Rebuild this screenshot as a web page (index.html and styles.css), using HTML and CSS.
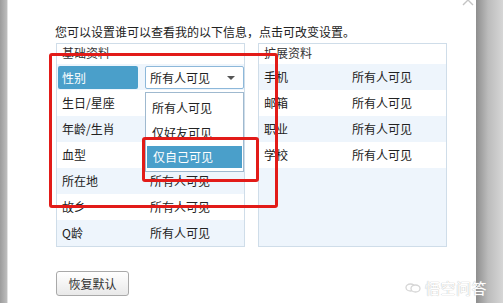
FILE: index.html
```html
<!DOCTYPE html>
<html lang="zh-CN">
<head>
    <meta charset="UTF-8">
    <title>隐私设置</title>
    <link rel="stylesheet" href="styles.css">
</head>
<body>
    <div class="screen">
        <div class="edge-left"></div>

        <div class="dialog">
            <p class="intro">您可以设置谁可以查看我的以下信息，点击可改变设置。</p>

            <div class="panels">
                <div class="panel">
                    <div class="panel-head">基础资料</div>
                    <div class="row alt">
                        <div class="label"><span class="picked">性别</span></div>
                        <div class="value">
                            <div class="select">所有人可见<span class="caret"></span></div>
                            <ul class="options">
                                <li>所有人可见</li>
                                <li>仅好友可见</li>
                                <li class="on">仅自己可见</li>
                            </ul>
                        </div>
                    </div>
                    <div class="row"><div class="label">生日/星座</div><div class="value"></div></div>
                    <div class="row alt"><div class="label">年龄/生肖</div><div class="value"></div></div>
                    <div class="row"><div class="label">血型</div><div class="value"></div></div>
                    <div class="row alt"><div class="label">所在地</div><div class="value">所有人可见</div></div>
                    <div class="row"><div class="label">故乡</div><div class="value">所有人可见</div></div>
                    <div class="row alt"><div class="label">Q龄</div><div class="value">所有人可见</div></div>
                </div>

                <div class="panel">
                    <div class="panel-head">扩展资料</div>
                    <div class="row alt"><div class="label">手机</div><div class="value">所有人可见</div></div>
                    <div class="row"><div class="label">邮箱</div><div class="value">所有人可见</div></div>
                    <div class="row alt"><div class="label">职业</div><div class="value">所有人可见</div></div>
                    <div class="row"><div class="label">学校</div><div class="value">所有人可见</div></div>
                    <div class="filler"></div>
                </div>
            </div>

            <button class="reset">恢复默认</button>
        </div>

        <div class="edge-right"></div>

        <svg class="close" width="14" height="12" viewBox="0 0 14 12">
            <path d="M2 -5 L12 5 M12 -5 L2 5" stroke="#c4c4c4" stroke-width="1.4" fill="none"/>
        </svg>

        <div class="mark mark-big"></div>
        <div class="mark mark-small"></div>

        <div class="watermark">
            <svg width="16" height="11" viewBox="0 0 16 11">
                <ellipse cx="5.5" cy="5.5" rx="4.5" ry="3.5" fill="none" stroke="#d6d6d6" stroke-width="1.3"/>
                <ellipse cx="10.5" cy="6.5" rx="4.5" ry="3.5" fill="#fff" stroke="#d6d6d6" stroke-width="1.3"/>
            </svg>
            <span>悟空问答</span>
        </div>
    </div>
</body>
</html>
```

FILE: styles.css
```css
body
{
    margin: 0;
    padding: 0;
    background: #fff;
    font-family: "Noto Sans CJK SC", "Liberation Sans", sans-serif;
    font-size: 12px;
    color: #222;
}

.screen
{
    position: relative;
    width: 503px;
    height: 303px;
    display: flex;
    overflow: hidden;
}

.edge-left
{
    width: 7px;
    background: linear-gradient(to right, #9c9c9c, #bdbdbd);
    border-right: 1px solid #e2e2e2;
}

.edge-right
{
    width: 27px;
    background: linear-gradient(to right, #8e8e8e, #bcbcbc 45%, #d6d6d6);
}

.dialog
{
    width: 420px;
    padding: 25px 0 0 48px;
    background: #fff;
}

.intro
{
    margin: 0 0 4px -1px;
    height: 14px;
    line-height: 14px;
}

.panels
{
    display: flex;
    gap: 13px;
}

.panel
{
    width: 187px;
    display: flex;
    flex-direction: column;
    border: 1px solid #cfdde9;
}

.panel-head
{
    height: 20px;
    line-height: 18px;
    padding-left: 5px;
    color: #333;
}

.row
{
    height: 26px;
    display: flex;
    align-items: center;
}

.alt,
.filler
{
    background: #eef5fc;
}

.filler
{
    flex: 1;
}

.label
{
    width: 83px;
    padding-left: 5px;
    height: 26px;
    line-height: 26px;
}

.value
{
    position: relative;
    flex: 1;
    padding-left: 5px;
    height: 26px;
    line-height: 26px;
}

.picked
{
    display: block;
    width: 76px;
    height: 23px;
    margin: 2px 0 0 -4px;
    padding-left: 4px;
    line-height: 23px;
    border-radius: 2px;
    background: #4a9fca;
    color: #fff;
}

.select
{
    position: relative;
    height: 21px;
    margin: 2px 0 0 -5px;
    padding-left: 4px;
    line-height: 21px;
    border: 1px solid #8db8da;
    border-radius: 2px;
    background: #fff;
}

.caret
{
    position: absolute;
    right: 8px;
    top: 9px;
    border-left: 4px solid transparent;
    border-right: 4px solid transparent;
    border-top: 4px solid #555;
}

.options
{
    position: absolute;
    top: 28px;
    left: 0;
    width: 97px;
    margin: 0;
    padding: 2px 0 3px;
    list-style: none;
    background: #fff;
    border: 1px solid #9fb9cf;
}

.options li
{
    height: 25px;
    line-height: 25px;
    padding-left: 6px;
}

.options .on
{
    height: 22px;
    line-height: 22px;
    margin: 1px 1px 0 1px;
    padding-left: 6px;
    background: #4a9fca;
    color: #fff;
}

.reset
{
    margin-top: 24px;
    width: 73px;
    height: 25px;
    padding: 0;
    font-family: inherit;
    font-size: 12px;
    color: #333;
    border: 1px solid #a9a9a9;
    border-radius: 3px;
    background: linear-gradient(#ffffff, #e9e9e9);
}

.close
{
    position: absolute;
    left: 461px;
    top: 0;
}

.mark
{
    position: absolute;
    border: 3px solid #e21b18;
    border-radius: 3px;
}

.mark-big
{
    left: 49px;
    top: 53px;
    width: 223px;
    height: 149px;
}

.mark-small
{
    left: 142px;
    top: 137px;
    width: 111px;
    height: 39px;
}

.watermark
{
    position: absolute;
    left: 405px;
    top: 277px;
    display: flex;
    align-items: center;
    gap: 4px;
    font-size: 15px;
    color: #fff;
    text-shadow: 0 0 1px #c2c2c2, 0 0 1px #c2c2c2;
    letter-spacing: 0.5px;
}
```
